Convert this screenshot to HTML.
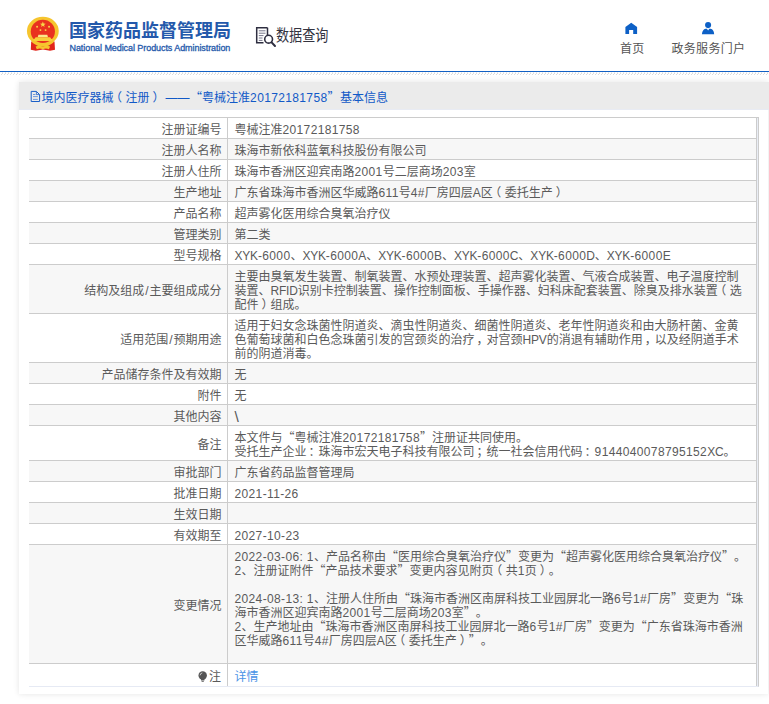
<!DOCTYPE html>
<html lang="zh-CN">
<head>
<meta charset="utf-8">
<title>国家药品监督管理局 数据查询</title>
<style>
html,body{margin:0;padding:0;}
body{width:769px;height:704px;overflow:hidden;background:#fff;position:relative;
  font-family:"Liberation Sans","Noto Sans CJK SC",sans-serif;font-size:12px;color:#5a5a5a;text-spacing-trim:space-all;}
.abs{position:absolute;white-space:nowrap;}
#hdr{position:absolute;left:0;top:0;width:769px;height:71px;background:#fff;}
#hline{position:absolute;left:0;top:71px;width:769px;height:1px;background:#1260c4;}
#hatch{position:absolute;left:0;top:72px;width:769px;height:3px;
  background:linear-gradient(90deg,transparent 0,transparent 2px,#ececec 2px,#ececec 3px) 0 0/3px 1px repeat-x,
  linear-gradient(90deg,transparent 0,transparent 2px,#dcdcdc 2px,#dcdcdc 3px) 0 1px/3px 1px repeat-x,
  linear-gradient(90deg,transparent 0,transparent 1px,#dcdcdc 1px,#dcdcdc 2px,transparent 2px) 0 2px/3px 1px repeat-x;}
#title{left:69px;top:19px;font-size:18px;line-height:24px;font-weight:bold;color:#2459ab;}
#sub{left:69.5px;top:42px;font-size:9px;line-height:12px;color:#2459ab;letter-spacing:-.07px;-webkit-text-stroke:.3px #2459ab;}
#dq{left:275.5px;top:25px;font-size:16px;line-height:22px;color:#33333f;transform-origin:0 50%;transform:scaleX(.82);}
.nav{font-size:12px;line-height:16px;color:#555;}
#panel{position:absolute;left:19px;top:82px;width:749px;height:612px;background:#fff;
  box-shadow:0 0 6px rgba(0,0,0,.11);}
#phead{position:absolute;left:0;top:0;width:750px;height:27px;background:#ebebeb;border-bottom:1px solid #e8ebf3;}
#ptitle{left:22.5px;top:8px;line-height:16px;font-size:12px;color:#1159c7;}
table{position:absolute;left:10px;top:35px;width:729px;border-collapse:separate;border-spacing:0;
  border-top:1px solid #ccc;border-right:1px solid #ccc;border-bottom:1px solid #e6eaf4;
  padding-right:1px;background:#e9edf5;table-layout:fixed;}
td{padding:5px 0 1px;line-height:14px;font-size:12px;border-bottom:1px solid #ccc;background:#fff;
  white-space:nowrap;vertical-align:middle;overflow:hidden;}
td.l{width:192.5px;text-align:right;padding-right:5.5px;border-right:1px solid #ccc;}
td.v{width:521.5px;text-align:left;padding-left:6.5px;border-right:1px solid #ccc;}
tr.g td{background:#f7f7f7;}
tr.last td{border-bottom:0;height:16px;}
.n{letter-spacing:.36px;}
.u{letter-spacing:-.2px;}
.pl{position:relative;left:-3.5px;}
.pr{position:relative;left:3px;}
.pc{position:relative;left:2px;}
.sl{padding:0 1px;}
.q{font-family:"Noto Sans CJK SC",sans-serif;line-height:0;}
a{color:#4a93e6;text-decoration:none;}
</style>
</head>
<body>
<div id="hdr">
  <svg class="abs" style="left:25px;top:15px" width="36" height="38" viewBox="0 0 36 38">
    <path d="M6.2 26.5 H29.5 L30 34.8 L25 35.8 L17.9 34.6 L10.8 35.8 L5.8 34.8 Z" fill="#e1251b"/>
    <ellipse cx="17.85" cy="16.1" rx="15.9" ry="14.4" fill="#f6c52e"/>
    <ellipse cx="17.85" cy="16.4" rx="12.1" ry="11.6" fill="#e9311f"/>
    <path d="M13.4 19.7 H22.3 L23 22.2 H12.7 Z" fill="#fbe88a"/>
    <path d="M10.6 22.2 H25.1 L26.4 24 H9.3 Z M8.6 24 H27.1 V25.9 H8.6 Z" fill="#f8cf3a"/>
    <path d="M17.85 6.6 l.75 1.95 2.1 .1 -1.65 1.3 .55 2 -1.75 -1.15 -1.75 1.15 .55 -2 -1.65 -1.3 2.1 -.1z" fill="#f9d648"/>
    <circle cx="12.1" cy="11.7" r=".95" fill="#f9d648"/><circle cx="24.05" cy="11.7" r=".95" fill="#f9d648"/>
    <circle cx="15.45" cy="15.1" r=".95" fill="#f9d648"/><circle cx="20.6" cy="15.1" r=".95" fill="#f9d648"/>
    <path d="M8.3 26.2 Q17.85 33.4 27.4 26.2 L28.6 27.6 Q17.85 36 7.1 27.6 Z" fill="#f6c52e"/>
    <path d="M10.6 31.6 Q14.5 29.6 17.85 32 Q21.2 29.6 25.1 31.6 L23.9 34.2 Q20.6 32.8 17.85 34.4 Q15.1 32.8 11.8 34.2 Z" fill="#f6c52e"/>
    <circle cx="17.85" cy="29.6" r="1.7" fill="#f6c52e"/>
  </svg>
  <div id="title" class="abs">国家药品监督管理局</div>
  <div id="sub" class="abs">National Medical Products Administration</div>
  <svg class="abs" style="left:254px;top:25px" width="24" height="24" viewBox="0 0 24 24" fill="none" stroke="#2e2e40">
    <path d="M13.5 2.7 H2.7 V17.8 H9.5" stroke-width="1.5"/>
    <path d="M13.5 2.7 V10" stroke-width="1.5"/>
    <path d="M4.8 5.8 H11.5 M4.8 8.2 H11.5 M4.8 10.6 H9.5 M4.8 13 H8.5 M4.8 15.4 H8.5" stroke-width="1" stroke="#77778a"/>
    <circle cx="14.6" cy="14.2" r="3.9" stroke-width="1.6"/>
    <path d="M17.6 17.4 L21 21" stroke-width="2" stroke-linecap="round"/>
  </svg>
  <div id="dq" class="abs">数据查询</div>
  <svg class="abs" style="left:620px;top:18px" width="100" height="20" viewBox="620 18 100 20">
    <path d="M625.4 27 L631.25 22.7 L637.1 27 V34 H633.2 V30 H629.1 V34 H625.4 Z" fill="#0d60c6"/>
    <circle cx="708.1" cy="25.1" r="3.05" fill="#0d60c6"/>
    <path d="M701.9 34.2 Q702.4 29.4 705.6 28.8 L706.9 28.8 L708.1 30.6 L709.3 28.8 L710.6 28.8 Q713.8 29.4 714.2 34.2 Z" fill="#0d60c6"/>
  </svg>
  <div class="abs nav" style="left:620px;top:40.5px;letter-spacing:.3px">首页</div>
    <div class="abs nav" style="left:671.5px;top:40.5px;letter-spacing:.3px">政务服务门户</div>
</div>
<div id="hline"></div>
<div id="hatch"></div>
<div id="panel">
  <div id="phead"></div>
  <svg class="abs" style="left:11px;top:8px" width="12" height="13" viewBox="0 0 12 13" fill="none" stroke="#1a5fc8" stroke-width="1">
    <path d="M1.2 1.4 H6.4 L9.6 4.6 V11.5 H1.2 Z"/><path d="M6.4 1.6 V4.6 H9.4" stroke-width=".8"/><path d="M3 4.5 H5.4 M3 6.6 H7.8 M3 9.4 H7.8" stroke-width=".8" stroke="#4f82d6"/>
  </svg>
  <div id="ptitle" class="abs">境内医疗器械<span class="pl">（</span>注册<span class="pr">）</span><span style="margin-left:4px">——</span><span class="q" style="margin-left:.5px">“</span>粤械注准<span class="n">20172181758</span><span class="q">”</span><span style="margin-left:.5px">基本信息</span></div>
  <table cellspacing="0" cellpadding="0">
    <tr><td class="l">注册证编号</td><td class="v">粤械注准<span class="n">20172181758</span></td></tr>
    <tr class="g"><td class="l">注册人名称</td><td class="v">珠海市新依科蓝氧科技股份有限公司</td></tr>
    <tr><td class="l">注册人住所</td><td class="v">珠海市香洲区迎宾南路<span class="n">2001</span>号二层商场<span class="n">203</span>室</td></tr>
    <tr class="g"><td class="l">生产地址</td><td class="v">广东省珠海市香洲区华威路<span class="n">611</span>号<span class="n">4#</span>厂房四层<span class="u">A</span>区<span class="pl">（</span>委托生产<span class="pr">）</span></td></tr>
    <tr><td class="l">产品名称</td><td class="v">超声雾化医用综合臭氧治疗仪</td></tr>
    <tr class="g"><td class="l">管理类别</td><td class="v">第二类</td></tr>
    <tr><td class="l">型号规格</td><td class="v"><span class="u">XYK</span><span class="n">-6000</span>、<span class="u">XYK</span><span class="n">-6000</span><span class="u">A</span>、<span class="u">XYK</span><span class="n">-6000</span><span class="u">B</span>、<span class="u">XYK</span><span class="n">-6000</span><span class="u">C</span>、<span class="u">XYK</span><span class="n">-6000</span><span class="u">D</span>、<span class="u">XYK</span><span class="n">-6000</span><span class="u">E</span></td></tr>
    <tr class="g"><td class="l">结构及组成<span class="sl">/</span>主要组成成分</td><td class="v">主要由臭氧发生装置、制氧装置、水预处理装置、超声雾化装置、气液合成装置、电子温度控制<br>装置、<span class="u">RFID</span>识别卡控制装置、操作控制面板、手操作器、妇科床配套装置、除臭及排水装置<span class="pl">（</span>选<br>配件<span class="pr">）</span>组成。</td></tr>
    <tr><td class="l">适用范围<span class="sl">/</span>预期用途</td><td class="v">适用于妇女念珠菌性阴道炎、滴虫性阴道炎、细菌性阴道炎、老年性阴道炎和由大肠杆菌、金黄<br>色葡萄球菌和白色念珠菌引发的宫颈炎的治疗<span class="pc">，</span>对宫颈<span class="u">HPV</span>的消退有辅助作用<span class="pc">，</span>以及经阴道手术<br>前的阴道消毒。</td></tr>
    <tr class="g"><td class="l">产品储存条件及有效期</td><td class="v">无</td></tr>
    <tr><td class="l">附件</td><td class="v">无</td></tr>
    <tr class="g"><td class="l">其他内容</td><td class="v"><span style="font-size:15.5px;line-height:0;position:relative;top:1px;-webkit-text-stroke:0">\</span></td></tr>
    <tr><td class="l">备注</td><td class="v">本文件与<span class="q">“</span>粤械注准<span class="n">20172181758</span><span class="q">”</span>注册证共同使用。<br>受托生产企业<span class="pc">：</span>珠海市宏天电子科技有限公司<span class="pc">；</span>统一社会信用代码<span class="pc">：</span><span class="n">9144040078795152</span><span class="u">XC</span>。</td></tr>
    <tr class="g"><td class="l">审批部门</td><td class="v">广东省药品监督管理局</td></tr>
    <tr><td class="l">批准日期</td><td class="v"><span class="n">2021-11-26</span></td></tr>
    <tr class="g"><td class="l">生效日期</td><td class="v">&nbsp;</td></tr>
    <tr><td class="l">有效期至</td><td class="v"><span class="n">2027-10-23</span></td></tr>
    <tr class="g"><td class="l">变更情况</td><td class="v"><span class="n">2022-03-06: 1</span>、产品名称由<span class="q">“</span>医用综合臭氧治疗仪<span class="q">”</span>变更为<span class="q">“</span>超声雾化医用综合臭氧治疗仪<span class="q">”</span>。<br><span class="n">2</span>、注册证附件<span class="q">“</span>产品技术要求<span class="q">”</span>变更内容见附页<span class="pl">（</span>共<span class="n">1</span>页<span class="pr">）</span>。<br><br><span class="n">2024-08-13: 1</span>、注册人住所由<span class="q">“</span>珠海市香洲区南屏科技工业园屏北一路<span class="n">6</span>号<span class="n">1#</span>厂房<span class="q">”</span>变更为<span class="q">“</span>珠<br>海市香洲区迎宾南路<span class="n">2001</span>号二层商场<span class="n">203</span>室<span class="q">”</span>。<br><span class="n">2</span>、生产地址由<span class="q">“</span>珠海市香洲区南屏科技工业园屏北一路<span class="n">6</span>号<span class="n">1#</span>厂房<span class="q">”</span>变更为<span class="q">“</span>广东省珠海市香洲<br>区华威路<span class="n">611</span>号<span class="n">4#</span>厂房四层<span class="u">A</span>区<span class="pl">（</span>委托生产<span class="pr">）</span><span class="q">”</span>。<br><br></td></tr>
    <tr class="last"><td class="l" style="padding-right:6px"><svg width="9.4" height="11.3" viewBox="0 0 10 12" style="vertical-align:-1px;margin-right:2px"><circle cx="5" cy="4.8" r="4.5" fill="#555"/><path d="M3.2 8.6 H6.8 V10 H3.2Z M3.8 10.6 H6.2 V11.4 H3.8Z" fill="#555"/><path d="M2.2 4.6 Q2.4 2.4 4.6 2" stroke="#ddd" stroke-width=".9" fill="none"/></svg>注</td><td class="v"><a>详情</a></td></tr>
  </table>
</div>
</body>
</html>
